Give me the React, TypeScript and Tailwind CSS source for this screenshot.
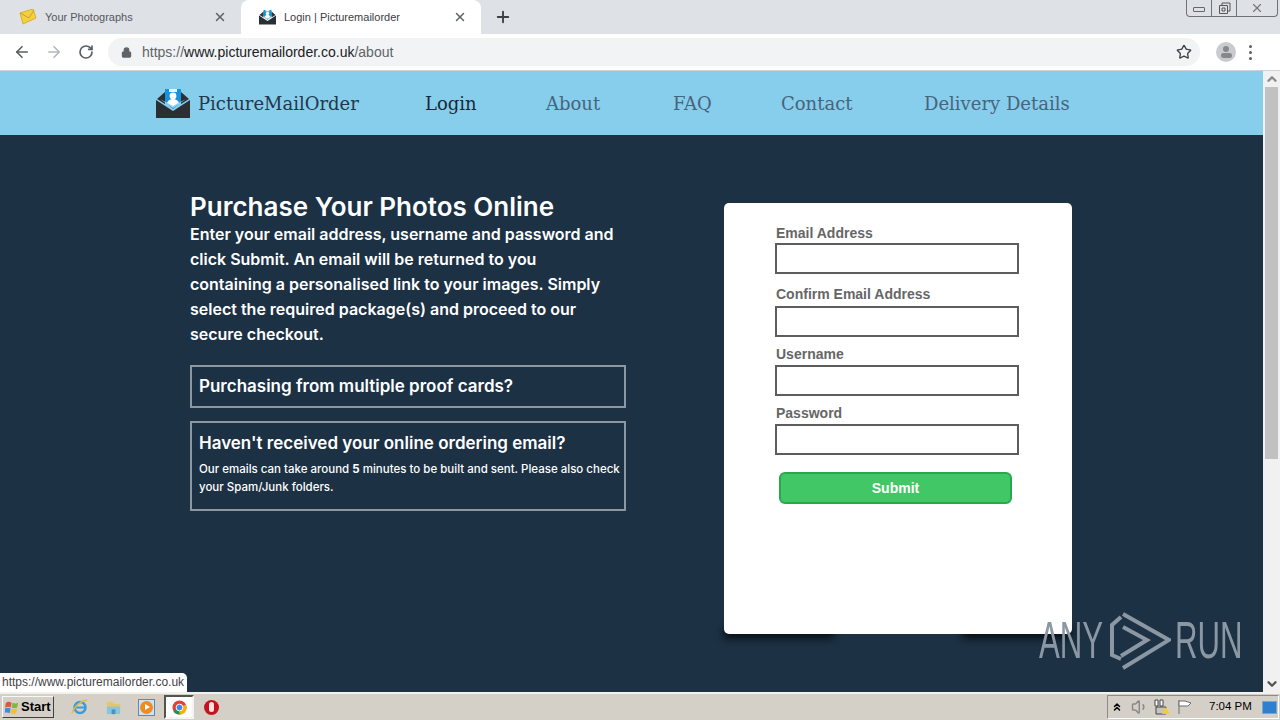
import { ArrowLeft, ArrowRight, RotateCw, Lock, Star, X, Plus, ChevronUp, ChevronDown, ChevronsUp, Volume1 } from 'lucide-react';

const poppins = 'font-["Inter",sans-serif]';
const slab = 'font-["DejaVu_Serif",serif]';
const arial = 'font-["Liberation_Sans",Arial,sans-serif]';

const LogoMark = ({ className }: { className: string }) => (
    <svg viewBox="0 0 34 30" className={className}>
        <path d="M9 1h16v13l-8 7-8-7z" fill="#1593dc" />
        <path d="M13 1h8v3h-8z" fill="#e8f6fc" />
        <circle cx="17" cy="8" r="3.4" fill="#fff" />
        <path d="M11 15c1-3 3.500-4 6-4s5 1 6 4l-6 4z" fill="#fff" />
        <path d="M9 4 1 11l8 5zM25 4l8 7-8 5z" fill="#2b2f33" />
        <path d="M0 12l17 11 17-11v18H0z" fill="#2b2f33" />
        <path d="M4 11l13 9 13-9-13 7z" fill="#9fd8ee" />
    </svg>
);

const Tab = ({ title, active, icon }: { title: string; active?: boolean; icon: React.ReactNode }) => (
    <div className={`w-[240px] h-[34px] flex items-center pl-[18px] pr-[14px] rounded-t-lg ${active ? 'bg-white' : ''}`}>
        {icon}
        <span className={`ml-[8px] flex-1 text-[11px] ${arial} ${active ? 'text-[#3c4043]' : 'text-[#55585c]'}`}>{title}</span>
        <X className="w-[14px] h-[14px] text-[#5f6368]" strokeWidth={2.5} />
    </div>
);

const NavLink = ({ label, active }: { label: string; active?: boolean }) => (
    <span className={`${slab} text-[18px] font-normal ${active ? 'text-[#17293a]' : 'text-[#46647c]'}`}>{label}</span>
);

const Field = ({ label, labelClass, inputClass }: { label: string; labelClass: string; inputClass: string }) => (
    <div>
        <div className={`${arial} ${labelClass} pl-px text-[14px] leading-[16px] font-bold text-[#666]`}>{label}</div>
        <div className={`${inputClass} w-[244px] h-[31px] border-2 border-[#5d5d5d] bg-white`}></div>
    </div>
);

export default function App() {
    return (
        <div className="relative w-[1280px] h-[720px] overflow-hidden flex flex-col bg-[#1c3144]">
            {/* chrome tabs */}
            <div className="h-[34px] bg-[#dee1e6] flex items-start pl-[1px] shrink-0">
                <Tab
                    title="Your Photographs"
                    icon={
                        <svg viewBox="0 0 18 16" className="w-[18px] h-[16px]">
                            <path d="M1 4l13-4 3 9-13 6z" fill="#f4cf3f" stroke="#d7b12c" />
                            <path d="M1 4l9 5 5-8" fill="none" stroke="#c9a227" />
                        </svg>
                    }
                />
                <Tab title="Login | Picturemailorder" active icon={<LogoMark className="w-[17px] h-[16px]" />} />
                <Plus className="ml-[13px] mt-[8px] w-[18px] h-[18px] text-[#3c4043]" strokeWidth={2.5} />
                <div className="ml-auto mr-[2px] w-[92px] h-[17px] border border-t-0 border-[#6f7378] rounded-b-[4px] flex">
                    <div className="w-[25px] border-r border-[#6f7378] flex items-center justify-center">
                        <div className="w-[12px] h-[5px] border border-[#666] rounded-[1px] mt-[3px]"></div>
                    </div>
                    <div className="w-[25px] border-r border-[#6f7378] flex items-center justify-center">
                        <svg viewBox="0 0 13 13" className="w-[13px] h-[13px]" fill="none" stroke="#555">
                            <path d="M4 3V1h8v8h-2" />
                            <path d="M1.500 3.500h8v8h-8z" />
                            <path d="M4 6h3v3H4z" />
                        </svg>
                    </div>
                    <div className="flex-1 flex items-center justify-center">
                        <X className="w-[14px] h-[14px] text-[#777]" strokeWidth={2} />
                    </div>
                </div>
            </div>

            {/* chrome toolbar */}
            <div className="h-[37px] bg-white flex items-center shrink-0 border-b border-[#cfd2d6]">
                <ArrowLeft className="ml-[13px] w-[18px] h-[18px] text-[#5a5e62]" strokeWidth={2.2} />
                <ArrowRight className="ml-[14px] w-[18px] h-[18px] text-[#b4b7bb]" strokeWidth={2.2} />
                <RotateCw className="ml-[15px] w-[16px] h-[16px] text-[#5a5e62]" strokeWidth={2.5} />
                <div className="ml-[14px] w-[1092px] h-[28px] bg-[#f1f3f4] rounded-full flex items-center pl-[13px]">
                    <Lock className="w-[11px] h-[11px] text-[#5f6368]" fill="#5f6368" strokeWidth={2.5} />
                    <span className={`ml-[10px] ${arial} text-[14px] text-[#5f6368]`}>
                        https://<span className="text-[#202124]">www.picturemailorder.co.uk</span>/about
                    </span>
                    <Star className="ml-auto mr-[8px] w-[16px] h-[16px] text-[#3c4043]" strokeWidth={2} />
                </div>
                <div className="ml-[16px] w-[20px] h-[20px] rounded-full bg-[#c9cbce] flex flex-col items-center justify-center">
                    <div className="w-[6px] h-[6px] rounded-full bg-[#85888c]"></div>
                    <div className="w-[11px] h-[5px] mt-[1px] rounded-full bg-[#85888c]"></div>
                </div>
                <div className="ml-[13px] flex flex-col gap-[3px]">
                    <div className="w-[3px] h-[3px] rounded-full bg-[#5a5e62]"></div>
                    <div className="w-[3px] h-[3px] rounded-full bg-[#5a5e62]"></div>
                    <div className="w-[3px] h-[3px] rounded-full bg-[#5a5e62]"></div>
                </div>
            </div>

            {/* page + scrollbar */}
            <div className="flex-1 min-h-0 flex">
                <div className="flex-1 flex flex-col min-w-0">
                    <nav className="h-[64px] bg-[#87ceec] flex items-center pl-[156px] shrink-0">
                        <LogoMark className="w-[34px] h-[30px]" />
                        <span className={`ml-[8px] w-[227px] ${slab} text-[18px] text-[#22384a]`}>PictureMailOrder</span>
                        <div className="w-[121px]"><NavLink label="Login" active /></div>
                        <div className="w-[127px]"><NavLink label="About" /></div>
                        <div className="w-[108px]"><NavLink label="FAQ" /></div>
                        <div className="w-[143px]"><NavLink label="Contact" /></div>
                        <NavLink label="Delivery Details" />
                    </nav>

                    <main className="flex-1 flex pl-[190px] pt-[57px]">
                        <div className="w-[436px] text-white">
                            <h1 className={`${poppins} text-[26px] leading-[30px] font-semibold`}>Purchase Your Photos Online</h1>
                            <p className={`${poppins} w-[432px] text-[16px] leading-[25px] font-semibold`}>
                                Enter your email address, username and password and click Submit. An email will be returned to you containing a personalised link to your images. Simply select the required package(s) and proceed to our secure checkout.
                            </p>
                            <div className="mt-[18px] h-[43px] border-2 border-[#8b97a1] pl-[7px] flex items-center">
                                <h2 className={`${poppins} text-[17px] font-semibold`}>Purchasing from multiple proof cards?</h2>
                            </div>
                            <div className="mt-[13px] h-[90px] border-2 border-[#8b97a1] pl-[7px] pt-[8px]">
                                <h2 className={`${poppins} text-[17px] leading-[24px] font-semibold`}>Haven't received your online ordering email?</h2>
                                <p className={`${poppins} mt-[5px] text-[11.500px] leading-[18px] font-medium`}>
                                    Our emails can take around <b>5</b> minutes to be built and sent. Please also check your Spam/Junk folders.
                                </p>
                            </div>
                        </div>

                        <div className="relative ml-[98px] mt-[11px] w-[348px] h-[431px]">
                            <div className="absolute left-[0px] bottom-[-4px] w-[110px] h-[10px] bg-black/80 blur-[4px]"></div>
                            <div className="absolute right-[0px] bottom-[-4px] w-[110px] h-[10px] bg-black/80 blur-[4px]"></div>
                            <div className={`relative h-full bg-white rounded-[5px] pl-[51px] pt-[22px]`}>
                                <Field label="Email Address" labelClass="" inputClass="mt-[2px]" />
                                <Field label="Confirm Email Address" labelClass="mt-[12px]" inputClass="mt-[4px]" />
                                <Field label="Username" labelClass="mt-[9px]" inputClass="mt-[3px]" />
                                <Field label="Password" labelClass="mt-[9px]" inputClass="mt-[3px]" />
                                <button className={`mt-[17px] ml-[4px] block w-[233px] h-[32px] rounded-[6px] bg-[#41c766] border-2 border-[#26a94c] ${arial} text-[14px] font-bold text-white`}>
                                    Submit
                                </button>
                            </div>
                        </div>
                    </main>
                </div>

                <div className="w-[17px] bg-[#f1f1f1] flex flex-col items-center shrink-0">
                    <ChevronUp className="w-[14px] h-[14px] mt-[1px] text-[#8a8a8a]" strokeWidth={4} />
                    <div className="w-[13px] h-[372px] mt-[1px] bg-[#c1c1c1]"></div>
                    <ChevronDown className="mt-auto mb-[1px] w-[14px] h-[14px] text-[#555]" strokeWidth={4} />
                </div>
            </div>

            {/* windows taskbar */}
            <div className="h-[28px] bg-[#d4d0c8] border-t-2 border-[#f3f1ec] flex items-center shrink-0">
                <div className="ml-[2px] w-[52px] h-[22px] bg-[#d4d0c8] border border-[#f8f8f8] border-r-[#404040] border-b-[#404040] flex items-center pl-[2px]">
                    <svg viewBox="0 0 16 16" className="w-[15px] h-[15px]">
                        <path d="M1 3c2-1.500 4-1.500 6 0L6 8C4 7 3 7 0 8z" fill="#e2572e" />
                        <path d="M8 3c2 1 4 1 6 0l-1 5c-2 1-4 1-6 0z" fill="#7fb83a" />
                        <path d="M0 9c2-1 4-1 6 0l-1 5c-2-1-4-1-6 0z" fill="#3a8fd8" />
                        <path d="M7 9c2 1 4 1 6 0l-1 5c-2 1-4 1-6 0z" fill="#f2bf2e" />
                    </svg>
                    <span className={`ml-[1px] ${arial} text-[13px] font-bold text-black`}>Start</span>
                </div>
                <svg viewBox="0 0 18 18" className="ml-[17px] w-[18px] h-[18px]" fill="none">
                    <circle cx="9" cy="9.500" r="5.500" stroke="#3a9bdc" strokeWidth="2.500" />
                    <path d="M4 9.500h10" stroke="#3a9bdc" strokeWidth="2" />
                    <path d="M1 15C3 9 9 3 16 2" stroke="#e7b93d" strokeWidth="1.500" />
                </svg>
                <svg viewBox="0 0 18 18" className="ml-[16px] w-[17px] h-[17px]">
                    <path d="M2 3h6l2 2h6v11H2z" fill="#e5c66f" />
                    <path d="M2 8h14v8H2z" fill="#8cc4dc" />
                    <path d="M7 11h4v5H7z" fill="#4c93b8" />
                </svg>
                <div className="ml-[16px] w-[17px] h-[17px] bg-[#cfe2f3] border border-[#4a90c8] flex items-center justify-center">
                    <div className="w-[13px] h-[13px] rounded-full bg-[#ef8b1f] flex items-center justify-center">
                        <div className="w-0 h-0 border-y-[3.500px] border-y-transparent border-l-[5px] border-l-white ml-px"></div>
                    </div>
                </div>
                <div className="ml-[9px] w-[30px] h-[24px] bg-white border-2 border-[#55534e] border-r-[#f4f4f4] border-b-[#f4f4f4] flex items-center justify-center">
                    <svg viewBox="0 0 16 16" className="w-[15px] h-[15px]">
                        <circle cx="8" cy="8" r="7.500" fill="#dc4437" />
                        <path d="M8 8 1.500 12A7.500 7.500 0 0 0 8 15.500z" fill="#0f9d58" />
                        <path d="M8 8l6.800-3.200A7.500 7.500 0 0 1 8 15.500z" fill="#f4b400" />
                        <circle cx="8" cy="8" r="3.600" fill="#4285f4" stroke="#fff" />
                    </svg>
                </div>
                <div className="ml-[10px] w-[15px] h-[15px] rounded-full bg-[#c5121d] flex items-center justify-center">
                    <div className="w-[5px] h-[10px] rounded-full bg-[#fbe4e4]"></div>
                </div>

                <div className="ml-auto mr-[1px] w-[172px] h-[24px] border border-[#8f8c85] border-r-white border-b-white flex items-center pl-[3px]">
                    <ChevronsUp className="w-[12px] h-[12px] text-black" strokeWidth={3} />
                    <Volume1 className="ml-[8px] w-[18px] h-[18px] text-[#8a8a8a]" />
                    <svg viewBox="0 0 16 16" className="ml-[5px] w-[16px] h-[16px]">
                        <path d="M1 1h3v6H1zM6 1h3v6H6z" fill="#fff" stroke="#444" />
                        <path d="M2 8h10v7H2z" fill="#c9c5bb" stroke="#444" />
                        <path d="M8 15l4-7 4 7z" fill="#f2cf2e" />
                    </svg>
                    <svg viewBox="0 0 16 16" className="ml-[7px] w-[16px] h-[16px]" fill="#fff" stroke="#6d6d6d">
                        <path d="M2 1v14" />
                        <path d="M2 2h6l6 2-3 3H2z" />
                    </svg>
                    <span className={`ml-[16px] ${arial} text-[11.500px] text-black`}>7:04 PM</span>
                    <div className="ml-auto mr-[1px] w-[15px] h-[13px] bg-[#2f7fd0] border border-[#7aa6c9]"></div>
                </div>
            </div>

            {/* status bubble */}
            <div className={`absolute left-0 bottom-[28px] h-[19px] pl-[2px] pr-[3px] bg-white rounded-tr-[5px] ${arial} text-[12px] leading-[19px] text-[#444]`}>
                https://www.picturemailorder.co.uk
            </div>

            {/* watermark */}
            <div className="absolute left-[1039px] top-[610px] flex items-center text-[#8b98a4] pointer-events-none">
                <span className={`w-[62px] ${arial} text-[52px] leading-[60px] origin-left scale-x-[0.6] font-normal`}>ANY</span>
                <svg viewBox="0 0 62 60" className="ml-[8px] w-[62px] h-[60px]" fill="none" stroke="currentColor" strokeWidth="4">
                    <path d="M12 7 3 15v30l9 4" />
                    <path d="M14 4 60 30 14 58" />
                    <path d="M14 17 38 30 12 46" />
                </svg>
                <span className={`ml-[4px] ${arial} text-[52px] leading-[60px] origin-left scale-x-[0.6] font-normal`}>RUN</span>
            </div>
        </div>
    );
}
